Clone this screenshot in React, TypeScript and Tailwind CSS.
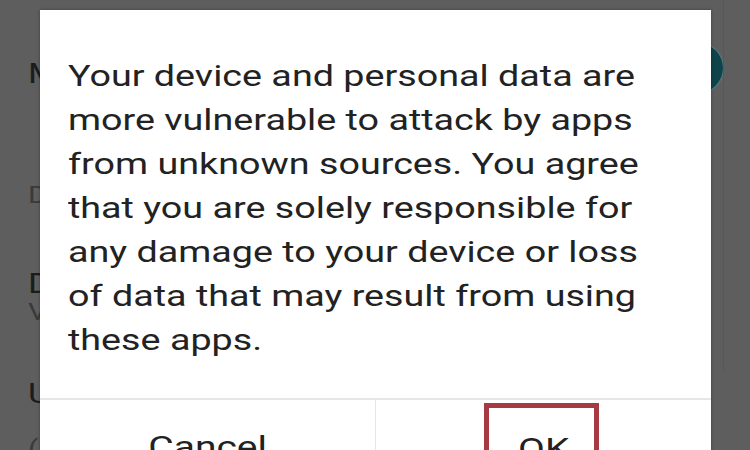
import React from 'react';

const settingsRows = [
  { text: 'Make passwords visible', kind: 'title', gap: 'mt-[59px]' },
  { text: 'Device administration', kind: 'sub', gap: 'mt-[94px]' },
  { text: 'Device administrators', kind: 'title', gap: 'mt-[60px]' },
  { text: 'View or deactivate device administrators', kind: 'sub', gap: 'mt-[1px]' },
  { text: 'Unknown sources', kind: 'title', gap: 'mt-[53px]' },
  { text: '(Allow installation of apps from unknown sources)', kind: 'sub', gap: 'mt-[28px]' },
];

const warningLines = [
  'Your device and personal data are',
  'more vulnerable to attack by apps',
  'from unknown sources. You agree',
  'that you are solely responsible for',
  'any damage to your device or loss',
  'of data that may result from using',
  'these apps.',
];

export default function App() {
  return (
    <div
      className="relative w-[750px] h-[450px] overflow-hidden bg-[#5e5e5e]"
      style={{ fontFamily: 'Roboto, "Noto Sans", Arial, sans-serif' }}
    >
      {/* Dimmed settings list behind the dialog */}
      <div className="flex flex-col pl-[28px]">
        {settingsRows.map((row) => (
          <div
            key={row.text}
            className={`${row.gap} whitespace-nowrap origin-left scale-x-[1.3] ${
              row.kind === 'title'
                ? 'text-[27px] leading-[30px] text-[#1c1c1c]'
                : 'text-[23px] leading-[26px] text-[#3a3a3a]'
            }`}
          >
            {row.text}
          </div>
        ))}
      </div>

      {/* Switch thumb peeking out on the right */}
      <div className="absolute left-[673px] top-[43px] w-[50px] h-[50px] rounded-full bg-[#0f434a] shadow-[0_0_2px_#4fb3bf]" />
      <div className="absolute left-[723px] top-0 w-px h-[370px] bg-[#575757]" />

      {/* Warning dialog */}
      <div className="absolute left-[40px] top-[10px] w-[671px] h-[480px] bg-white shadow-[0_0_3px_rgba(0,0,0,0.35)] flex flex-col">
        <div className="pl-[28px] pt-[44px] h-[388px] text-[29px] leading-[44px] text-[#222]">
          {warningLines.map((line) => (
            <div key={line} className="whitespace-nowrap origin-left scale-x-[1.3]">
              {line}
            </div>
          ))}
        </div>
        <div className="flex flex-1 border-t-[2px] border-[#e6e6e6]">
          <div className="flex-1 flex justify-center pt-[30px] text-[30px] leading-[34px] text-[#222] border-r-[1px] border-[#e6e6e6]">
            <span className="scale-x-[1.3]">Cancel</span>
          </div>
          <div className="relative flex-1 flex justify-center pt-[32px] text-[30px] leading-[34px] text-[#222]">
            <span className="scale-x-[1.3]">OK</span>
            <div className="absolute left-[108px] top-[3px] w-[115px] h-[80px] border-[5px] border-[#a53a43]" />
          </div>
        </div>
      </div>
    </div>
  );
}
